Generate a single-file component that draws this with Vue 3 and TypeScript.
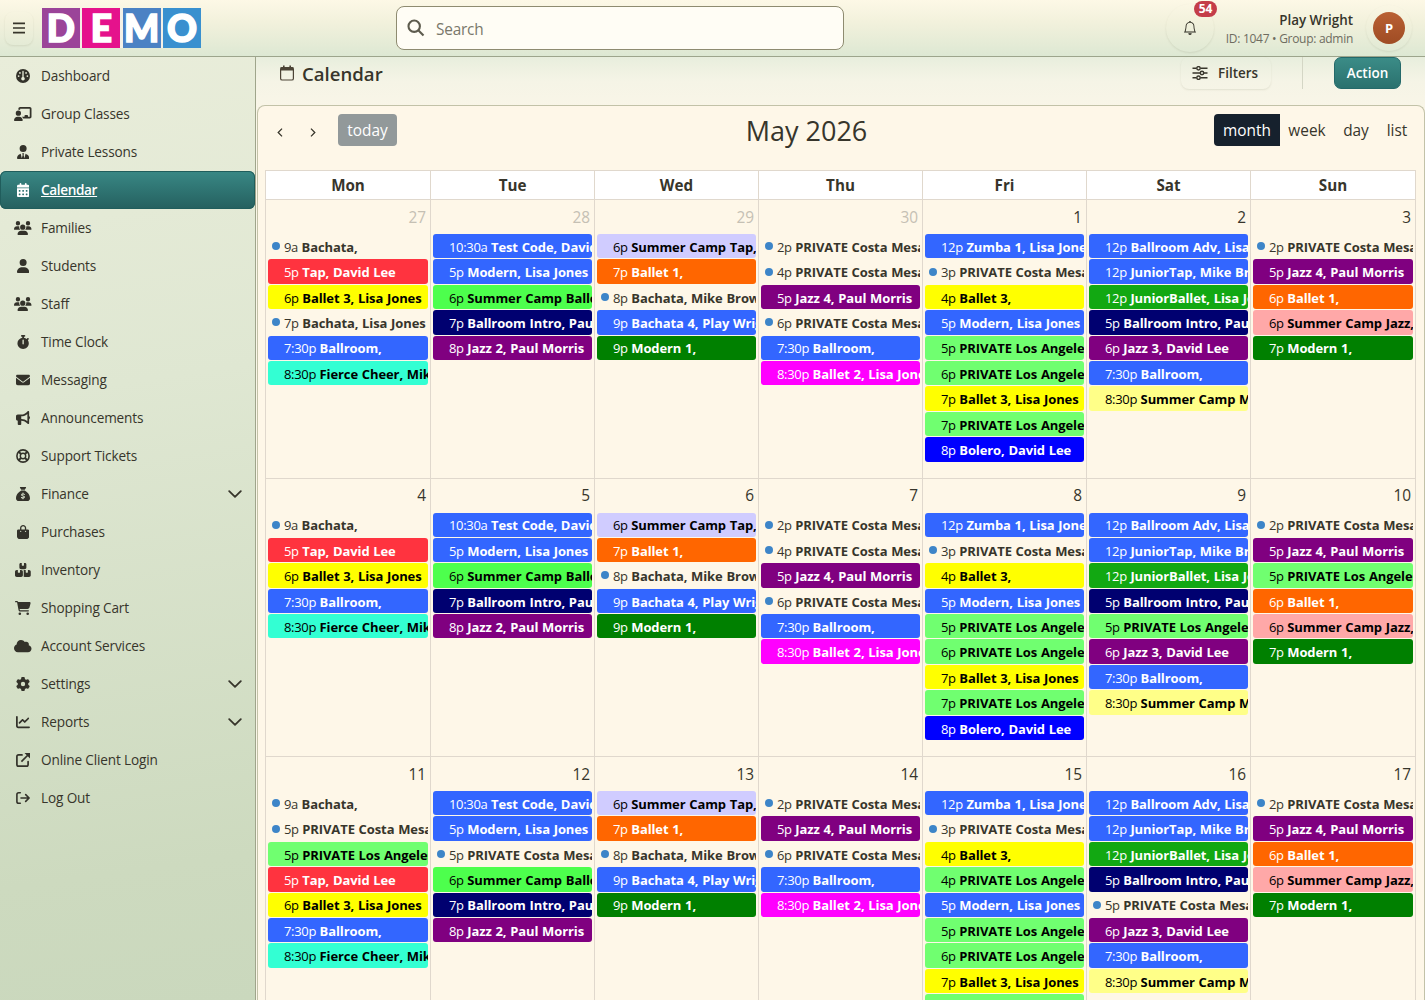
<script setup lang="ts">
interface NavItem {
  label: string
  icon: string
  width?: number
  active?: boolean
  expandable?: boolean
}

interface CalendarEvent {
  time: string
  title: string
  color: string
}

interface Day {
  num: number
  muted?: boolean
  events: CalendarEvent[]
}

const users =
  'M144 0a80 80 0 1 1 0 160A80 80 0 1 1 144 0zM512 0a80 80 0 1 1 0 160A80 80 0 1 1 512 0zM0 298.7C0 239.8 47.8 192 106.7 192h42.7c15.9 0 31 3.5 44.6 9.7c-1.3 7.2-1.9 14.7-1.9 22.3c0 38.2 16.8 72.5 43.3 96c-.2 0-.4 0-.7 0H21.3C9.6 320 0 310.4 0 298.7zM405.3 320c-.2 0-.4 0-.7 0c26.6-23.5 43.3-57.8 43.3-96c0-7.6-.7-15-1.9-22.3c13.6-6.3 28.7-9.7 44.6-9.7h42.7C592.2 192 640 239.8 640 298.7c0 11.8-9.6 21.3-21.3 21.3H405.3zM224 224a96 96 0 1 1 192 0 96 96 0 1 1 -192 0zM128 485.3C128 411.7 187.7 352 261.3 352H378.7C452.3 352 512 411.7 512 485.3c0 14.7-11.9 26.7-26.7 26.7H154.7c-14.7 0-26.7-11.9-26.7-26.7z'

const nav: NavItem[] = [
  { label: 'Dashboard', icon: 'M0 256a256 256 0 1 1 512 0A256 256 0 1 1 0 256zm320 96c0-26.9-16.5-49.9-40-59.3V88c0-13.3-10.7-24-24-24s-24 10.7-24 24V292.7c-23.5 9.5-40 32.5-40 59.3c0 35.3 28.7 64 64 64s64-28.7 64-64zM144 176a32 32 0 1 0 0-64 32 32 0 1 0 0 64zm-16 80a32 32 0 1 0 -64 0 32 32 0 1 0 64 0zm288 32a32 32 0 1 0 0-64 32 32 0 1 0 0 64zM400 144a32 32 0 1 0 -64 0 32 32 0 1 0 64 0z' },
  { label: 'Group Classes', width: 640, icon: 'M160 64c0-35.3 28.7-64 64-64H576c35.3 0 64 28.7 64 64V352c0 35.3-28.7 64-64 64H336.8c-11.8-25.5-29.9-47.5-52.4-64H384V320c0-17.7 14.3-32 32-32h64c17.7 0 32 14.3 32 32v32h64V64L224 64v49.1C205.2 102.2 183.3 96 160 96V64zm0 64a96 96 0 1 1 0 192 96 96 0 1 1 0-192zM133.3 352h53.3C260.3 352 320 411.7 320 485.3c0 14.7-11.9 26.7-26.7 26.7H26.7C11.9 512 0 500.1 0 485.3C0 411.7 59.7 352 133.3 352z' },
  { label: 'Private Lessons', width: 448, icon: 'M96 128a128 128 0 1 0 256 0A128 128 0 1 0 96 128zm94.5 200.2l18.6 31L175.8 483.1l-36-146.9c-2-8.1-9.8-13.4-17.9-11.3C51.9 342.4 0 405.8 0 481.3c0 17 13.8 30.7 30.7 30.7H162.5H168 280h5.5H417.3c17 0 30.7-13.8 30.7-30.7c0-75.5-51.9-138.9-121.9-156.4c-8.1-2-15.9 3.3-17.9 11.3l-36 146.9L238.9 359.2l18.6-31c6.4-10.7-1.3-24.2-13.7-24.2H224 204.3c-12.4 0-20.1 13.6-13.7 24.2z' },
  { label: 'Calendar', width: 448, active: true, icon: 'M128 0c17.7 0 32 14.3 32 32V64H288V32c0-17.7 14.3-32 32-32s32 14.3 32 32V64h48c26.5 0 48 21.5 48 48v48H0V112C0 85.5 21.5 64 48 64H96V32c0-17.7 14.3-32 32-32zM0 192H448V464c0 26.5-21.5 48-48 48H48c-26.5 0-48-21.5-48-48V192zm64 80v32c0 8.8 7.2 16 16 16h32c8.8 0 16-7.2 16-16V272c0-8.8-7.2-16-16-16H80c-8.8 0-16 7.2-16 16zm128 0v32c0 8.8 7.2 16 16 16h32c8.8 0 16-7.2 16-16V272c0-8.8-7.2-16-16-16H208c-8.8 0-16 7.2-16 16zm144-16c-8.8 0-16 7.2-16 16v32c0 8.8 7.2 16 16 16h32c8.8 0 16-7.2 16-16V272c0-8.8-7.2-16-16-16H336zM64 400v32c0 8.8 7.2 16 16 16h32c8.8 0 16-7.2 16-16V400c0-8.8-7.2-16-16-16H80c-8.8 0-16 7.2-16 16zm144-16c-8.8 0-16 7.2-16 16v32c0 8.8 7.2 16 16 16h32c8.8 0 16-7.2 16-16V400c0-8.8-7.2-16-16-16H208zm112 16v32c0 8.8 7.2 16 16 16h32c8.8 0 16-7.2 16-16V400c0-8.8-7.2-16-16-16H336c-8.8 0-16 7.2-16 16z' },
  { label: 'Families', width: 640, icon: users },
  { label: 'Students', width: 448, icon: 'M224 256A128 128 0 1 0 224 0a128 128 0 1 0 0 256zm-45.7 48C79.8 304 0 383.8 0 482.3C0 498.7 13.3 512 29.7 512H418.3c16.4 0 29.7-13.3 29.7-29.7C448 383.8 368.2 304 269.7 304H178.3z' },
  { label: 'Staff', width: 640, icon: users },
  { label: 'Time Clock', width: 448, icon: 'M176 0c-17.7 0-32 14.3-32 32s14.3 32 32 32h16V98.4C92.3 113.8 16 200 16 304c0 114.9 93.1 208 208 208s208-93.1 208-208c0-41.8-12.3-80.7-33.5-113.2l24.1-24.1c12.5-12.5 12.5-32.8 0-45.3s-32.8-12.5-45.3 0L355.7 143c-28.1-23-62.2-38.8-99.7-44.6V64h16c17.7 0 32-14.3 32-32s-14.3-32-32-32H224 176zm72 192V320c0 13.3-10.7 24-24 24s-24-10.7-24-24V192c0-13.3 10.7-24 24-24s24 10.7 24 24z' },
  { label: 'Messaging', icon: 'M48 64C21.5 64 0 85.5 0 112c0 15.1 7.1 29.3 19.2 38.4L236.8 313.6c11.4 8.5 27 8.5 38.4 0L492.8 150.4c12.1-9.1 19.2-23.3 19.2-38.4c0-26.5-21.5-48-48-48H48zM0 176V384c0 35.3 28.7 64 64 64H448c35.3 0 64-28.7 64-64V176L294.4 339.2c-22.8 17.1-54 17.1-76.8 0L0 176z' },
  { label: 'Announcements', icon: 'M480 32c0-12.9-7.8-24.6-19.8-29.6s-25.7-2.2-34.9 6.9L381.7 53c-48 48-113.1 75-181 75H192 160 64c-35.3 0-64 28.7-64 64v96c0 35.3 28.7 64 64 64l0 128c0 17.7 14.3 32 32 32h64c17.7 0 32-14.3 32-32V352l8.7 0c67.9 0 133 27 181 75l43.6 43.6c9.2 9.2 22.9 11.9 34.9 6.9s19.8-16.6 19.8-29.6V300.4c18.6-8.8 32-32.5 32-60.4s-13.4-51.6-32-60.4V32zm-64 76.7V240 371.3C357.2 317.8 280.5 288 200.7 288H192V192h8.7c79.8 0 156.5-29.8 215.3-83.3z' },
  { label: 'Support Tickets', icon: 'ring' },
  { label: 'Finance', icon: 'sack', expandable: true },
  { label: 'Purchases', width: 448, icon: 'M160 112c0-35.3 28.7-64 64-64s64 28.7 64 64v48H160V112zm-48 48H48c-26.5 0-48 21.5-48 48V416c0 53 43 96 96 96H352c53 0 96-43 96-96V208c0-26.5-21.5-48-48-48H336V112C336 50.1 285.9 0 224 0S112 50.1 112 112v48zm24 48a24 24 0 1 1 0 48 24 24 0 1 1 0-48zm152 24a24 24 0 1 1 48 0 24 24 0 1 1 -48 0z' },
  { label: 'Inventory', width: 576, icon: 'M248 0H208c-26.5 0-48 21.5-48 48V160c0 35.3 28.7 64 64 64H352c35.3 0 64-28.7 64-64V48c0-26.5-21.5-48-48-48H328V80c0 8.8-7.2 16-16 16H264c-8.8 0-16-7.2-16-16V0zM64 256c-35.3 0-64 28.7-64 64V448c0 35.3 28.7 64 64 64H224c35.3 0 64-28.7 64-64V320c0-35.3-28.7-64-64-64H184v80c0 8.8-7.2 16-16 16H120c-8.8 0-16-7.2-16-16V256H64zM352 512H512c35.3 0 64-28.7 64-64V320c0-35.3-28.7-64-64-64H472v80c0 8.8-7.2 16-16 16H408c-8.8 0-16-7.2-16-16V256H352c-15 0-28.8 5.1-39.7 13.8c4.9 10.4 7.7 22 7.7 34.2V464c0 12.2-2.8 23.8-7.7 34.2C323.2 506.9 337 512 352 512z' },
  { label: 'Shopping Cart', width: 576, icon: 'M0 24C0 10.7 10.7 0 24 0H69.5c22 0 41.5 12.8 50.6 32h411c26.3 0 45.5 25 38.6 50.4l-41 152.3c-8.5 31.4-37 53.3-69.5 53.3H170.7l5.4 28.5c2.2 11.3 12.1 19.5 23.6 19.5H488c13.3 0 24 10.7 24 24s-10.7 24-24 24H199.7c-34.6 0-64.3-24.6-70.7-58.5L77.4 54.5c-.7-3.8-4-6.5-7.9-6.5H24C10.7 48 0 37.3 0 24zM128 464a48 48 0 1 1 96 0 48 48 0 1 1 -96 0zm336-48a48 48 0 1 1 0 96 48 48 0 1 1 0-96z' },
  { label: 'Account Services', width: 640, icon: 'M0 336c0 79.5 64.5 144 144 144H512c70.7 0 128-57.3 128-128c0-61.9-44-113.6-102.4-125.4c4.1-10.7 6.4-22.4 6.4-34.6c0-53-43-96-96-96c-19.7 0-38.1 6-53.3 16.2C367 64.2 315.3 32 256 32C167.6 32 96 103.6 96 192c0 2.7 .1 5.4 .2 8.1C40.2 219.8 0 273.2 0 336z' },
  { label: 'Settings', expandable: true, icon: 'M495.9 166.6c3.2 8.7 .5 18.4-6.4 24.6l-43.3 39.4c1.1 8.3 1.7 16.8 1.7 25.4s-.6 17.1-1.7 25.4l43.3 39.4c6.9 6.2 9.6 15.9 6.4 24.6c-4.4 11.9-9.7 23.3-15.8 34.3l-4.7 8.1c-6.6 11-14 21.4-22.1 31.2c-5.9 7.2-15.7 9.6-24.5 6.8l-55.7-17.7c-13.4 10.3-28.2 18.9-44 25.4l-12.5 57.1c-2 9.1-9 16.3-18.2 17.8c-13.8 2.3-28 3.5-42.5 3.5s-28.7-1.2-42.5-3.5c-9.2-1.5-16.2-8.7-18.2-17.8l-12.5-57.1c-15.8-6.5-30.6-15.1-44-25.4L83.1 425.9c-8.8 2.8-18.6 .3-24.5-6.8c-8.1-9.8-15.5-20.2-22.1-31.2l-4.7-8.1c-6.1-11-11.4-22.4-15.8-34.3c-3.2-8.7-.5-18.4 6.4-24.6l43.3-39.4C64.6 273.1 64 264.6 64 256s.6-17.1 1.7-25.4L22.4 191.2c-6.9-6.2-9.6-15.9-6.4-24.6c4.4-11.9 9.7-23.3 15.8-34.3l4.7-8.1c6.6-11 14-21.4 22.1-31.2c5.9-7.2 15.7-9.6 24.5-6.8l55.7 17.7c13.4-10.3 28.2-18.9 44-25.4l12.5-57.1c2-9.1 9-16.3 18.2-17.8C227.3 1.2 241.5 0 256 0s28.7 1.2 42.5 3.5c9.2 1.5 16.2 8.7 18.2 17.8l12.5 57.1c15.8 6.5 30.6 15.1 44 25.4l55.7-17.7c8.8-2.8 18.6-.3 24.5 6.8c8.1 9.8 15.5 20.2 22.1 31.2l4.7 8.1c6.1 11 11.4 22.4 15.8 34.3zM256 336a80 80 0 1 0 0-160 80 80 0 1 0 0 160z' },
  { label: 'Reports', expandable: true, icon: 'M64 64c0-17.7-14.3-32-32-32S0 46.3 0 64V400c0 44.2 35.8 80 80 80H480c17.7 0 32-14.3 32-32s-14.3-32-32-32H80c-8.8 0-16-7.2-16-16V64zm406.6 86.6c12.5-12.5 12.5-32.8 0-45.3s-32.8-12.5-45.3 0L320 210.7l-57.4-57.4c-12.5-12.5-32.8-12.5-45.3 0l-112 112c-12.5 12.5-12.5 32.8 0 45.3s32.8 12.5 45.3 0L240 221.3l57.4 57.4c12.5 12.5 32.8 12.5 45.3 0l128-128z' },
  { label: 'Online Client Login', icon: 'external' },
  { label: 'Log Out', icon: 'logout' },
]

const darkText = new Set(['yellow', 'lime', 'mint', 'aqua', 'lav', 'pink', 'cream'])

// Each entry is "time|title|color".
const ev = (...rows: string[]): CalendarEvent[] =>
  rows.map((r) => {
    const [time, title, color] = r.split('|')
    return { time, title, color }
  })

const costa = (t: string) => `${t}|PRIVATE Costa Mesa|dot`
const losAngeles = (t: string) => `${t}|PRIVATE Los Angeles|mint`
const ballroom = '7:30p|Ballroom,|blue'
const tap = '5p|Tap, David Lee|red'
const ballet3 = '6p|Ballet 3, Lisa Jones|yellow'
const cheer = '8:30p|Fierce Cheer, Mike|aqua'
const modern = '5p|Modern, Lisa Jones|blue'
const jazz4 = '5p|Jazz 4, Paul Morris|purple'

const tuesday = ev('10:30a|Test Code, David|blue', modern, '6p|Summer Camp Ballet|lime', '7p|Ballroom Intro, Paul|navy', '8p|Jazz 2, Paul Morris|purple')
const wednesday = ev('6p|Summer Camp Tap,|lav', '7p|Ballet 1,|orange', '8p|Bachata, Mike Brown|dot', '9p|Bachata 4, Play Wright|blue', '9p|Modern 1,|green')
const thursday = ev(costa('2p'), costa('4p'), jazz4, costa('6p'), ballroom, '8:30p|Ballet 2, Lisa Jones|magenta')
const friday = ev('12p|Zumba 1, Lisa Jones|blue', costa('3p'), '4p|Ballet 3,|yellow', modern, losAngeles('5p'), losAngeles('6p'), '7p|Ballet 3, Lisa Jones|yellow', losAngeles('7p'), '8p|Bolero, David Lee|pureblue')
const satHead = ['12p|Ballroom Adv, Lisa|blue', '12p|JuniorTap, Mike Brown|blue', '12p|JuniorBallet, Lisa Jones|leaf', '5p|Ballroom Intro, Paul|navy']
const satTail = ['6p|Jazz 3, David Lee|purple', ballroom, '8:30p|Summer Camp Modern|cream']
const sunTail = ['6p|Ballet 1,|orange', '6p|Summer Camp Jazz,|pink', '7p|Modern 1,|green']

const weeks: Day[][] = [
  [
    { num: 27, muted: true, events: ev('9a|Bachata,|dot', tap, ballet3, '7p|Bachata, Lisa Jones|dot', ballroom, cheer) },
    { num: 28, muted: true, events: tuesday },
    { num: 29, muted: true, events: wednesday },
    { num: 30, muted: true, events: thursday },
    { num: 1, events: friday },
    { num: 2, events: ev(...satHead, ...satTail) },
    { num: 3, events: ev(costa('2p'), jazz4, ...sunTail) },
  ],
  [
    { num: 4, events: ev('9a|Bachata,|dot', tap, ballet3, ballroom, cheer) },
    { num: 5, events: tuesday },
    { num: 6, events: wednesday },
    { num: 7, events: thursday },
    { num: 8, events: friday },
    { num: 9, events: ev(...satHead, losAngeles('5p'), ...satTail) },
    { num: 10, events: ev(costa('2p'), jazz4, losAngeles('5p'), ...sunTail) },
  ],
  [
    { num: 11, events: ev('9a|Bachata,|dot', costa('5p'), losAngeles('5p'), tap, ballet3, ballroom, cheer) },
    { num: 12, events: ev('10:30a|Test Code, David|blue', modern, costa('5p'), '6p|Summer Camp Ballet|lime', '7p|Ballroom Intro, Paul|navy', '8p|Jazz 2, Paul Morris|purple') },
    { num: 13, events: wednesday },
    { num: 14, events: ev(costa('2p'), jazz4, costa('6p'), ballroom, '8:30p|Ballet 2, Lisa Jones|magenta') },
    { num: 15, events: ev('12p|Zumba 1, Lisa Jones|blue', costa('3p'), '4p|Ballet 3,|yellow', losAngeles('4p'), modern, losAngeles('5p'), losAngeles('6p'), '7p|Ballet 3, Lisa Jones|yellow', losAngeles('7p')) },
    { num: 16, events: ev(...satHead, costa('5p'), ...satTail) },
    { num: 17, events: ev(costa('2p'), jazz4, ...sunTail) },
  ],
]

const weekdays = ['Mon', 'Tue', 'Wed', 'Thu', 'Fri', 'Sat', 'Sun']
const logo = [
  { ch: 'D', bg: '#9b4499' },
  { ch: 'E', bg: '#e5128c' },
  { ch: 'M', bg: '#4b82c4' },
  { ch: 'O', bg: '#3990cf' },
]
</script>

<template>
  <div class="app">
    <header class="top">
      <button class="burger" aria-label="Menu">
        <svg width="14" height="14" viewBox="0 0 14 14"><path d="M1 2.4h12M1 7h12M1 11.6h12" stroke="currentColor" stroke-width="1.7" /></svg>
      </button>
      <div class="logo">
        <span v-for="l in logo" :key="l.ch" :style="{ background: l.bg }"><b>{{ l.ch }}</b></span>
      </div>
      <div class="search">
        <svg width="18" height="18" viewBox="0 0 18 18" fill="none" stroke="currentColor" stroke-width="2.1"><circle cx="7.2" cy="7.2" r="5.7" /><path d="M11.3 11.3l5.2 5.2" /></svg>
        <span>Search</span>
      </div>
      <div class="bell">
        <svg width="14" height="14" viewBox="0 0 16 16" fill="currentColor"><path d="M8 16a2 2 0 0 0 2-2H6a2 2 0 0 0 2 2M8 1.918l-.797.161A4 4 0 0 0 4 6c0 .628-.134 2.197-.459 3.742-.16.767-.376 1.566-.663 2.258h10.244c-.287-.692-.502-1.49-.663-2.258C12.134 8.197 12 6.628 12 6a4 4 0 0 0-3.203-3.92zM14.22 12c.223.447.481.801.78 1H1c.299-.199.557-.553.78-1C2.68 10.2 3 6.88 3 6c0-2.42 1.72-4.44 4.005-4.901a1 1 0 1 1 1.99 0A5 5 0 0 1 13 6c0 .88.32 4.2 1.22 6" /></svg>
        <span class="badge">54</span>
      </div>
      <div class="who">
        <strong>Play Wright</strong>
        <small>ID: 1047 • Group: admin</small>
      </div>
      <div class="ring"><span class="avatar">P</span></div>
    </header>

    <div class="body">
      <nav class="side">
        <a v-for="item in nav" :key="item.label" class="item" :class="{ active: item.active }">
          <span class="ico">
            <svg v-if="item.icon === 'ring'" width="14" height="14" viewBox="0 0 14 14" fill="none" stroke="currentColor">
              <circle cx="7" cy="7" r="6.1" stroke-width="1.6" /><circle cx="7" cy="7" r="2.7" stroke-width="1.4" />
              <path d="M2.7 2.7l2.4 2.4M11.3 2.7L8.9 5.1M2.7 11.3l2.4-2.4M11.3 11.3L8.9 8.9" stroke-width="2" />
            </svg>
            <svg v-else-if="item.icon === 'sack'" width="14" height="14" viewBox="0 0 512 512">
              <path fill="currentColor" d="M320 96H192L144.6 24.9C137.5 14.2 145.1 0 157.9 0H354.1c12.8 0 20.4 14.2 13.3 24.9L320 96zM192 128H320c3.8 2.5 8.1 5.3 13 8.4C389.7 172.7 512 250.9 512 416c0 53-43 96-96 96H96c-53 0-96-43-96-96C0 250.9 122.3 172.7 179 136.4c4.8-3.1 9.2-5.9 13-8.4z" />
              <path fill="none" stroke="#dbe4cf" stroke-width="38" stroke-linecap="round" d="M310 270c-30-14-100-26-104 18c-2 52 100 22 102 76c-2 46-76 38-108 18M256 222v26M256 404v22" />
            </svg>
            <svg v-else-if="item.icon === 'external'" width="14" height="14" viewBox="0 0 14 14" fill="none" stroke="currentColor" stroke-width="1.7">
              <path d="M6 1.9H2.6Q.9 1.9.9 3.600V11.4Q.9 13.100 2.600 13.100H10.400Q12.100 13.100 12.100 11.400V8.500" stroke-linecap="round" /><path d="M5.400 8.600L12 2" /><path d="M8.500 0H14V5.500z" fill="currentColor" stroke="none" />
            </svg>
            <svg v-else-if="item.icon === 'logout'" width="14" height="14" viewBox="0 0 14 14" fill="none" stroke="currentColor" stroke-width="1.6" stroke-linecap="round" stroke-linejoin="round">
              <path d="M4.300 1.800H2.700Q.9 1.800.9 3.600V10.400Q.9 12.200 2.700 12.200H4.300M5 7H13M9.700 3.600L13.100 7L9.700 10.400" />
            </svg>
            <svg v-else :width="((item.width ?? 512) / 512) * 14" height="14" :viewBox="`0 0 ${item.width ?? 512} 512`"><path fill="currentColor" :d="item.icon" /></svg>
          </span>
          <span class="label">{{ item.label }}</span>
          <svg v-if="item.expandable" class="chev" width="14" height="8" viewBox="0 0 14 8" fill="none" stroke="currentColor" stroke-width="1.8" stroke-linecap="round" stroke-linejoin="round"><path d="M1.200 1.200L7 6.800L12.800 1.200" /></svg>
        </a>
      </nav>

      <main class="main">
        <div class="bar">
          <svg width="14" height="16" viewBox="0 0 14 16"><rect x=".6" y="2.600" width="12.800" height="12.400" rx="1.600" fill="none" stroke="currentColor" stroke-width="1.200" /><path d="M.6 2.200h12.800v3.200H.6zM3 .4h1.600v2.400H3zM9.400.4H11v2.400H9.400z" fill="currentColor" /></svg>
          <h1>Calendar</h1>
          <button class="filters">
            <svg width="16" height="14" viewBox="0 0 16 14" fill="none" stroke="currentColor" stroke-width="1.400"><path d="M0.500 2.300h4M8.500 2.300h7M.5 7h7.500M12 7h3.500M.5 11.700h4M8.500 11.700h7" /><circle cx="6.500" cy="2.300" r="1.700" /><circle cx="10" cy="7" r="1.700" /><circle cx="6.500" cy="11.700" r="1.700" /></svg>
            <span>Filters</span>
          </button>
          <i class="sep"></i>
          <button class="action">Action</button>
        </div>

        <section class="card">
          <div class="tools">
            <div class="left">
              <svg width="6" height="9" viewBox="0 0 6 9" fill="none" stroke="currentColor" stroke-width="1.300"><path d="M5 .6L1.200 4.500L5 8.400" /></svg>
              <svg width="6" height="9" viewBox="0 0 6 9" fill="none" stroke="currentColor" stroke-width="1.300"><path d="M1 .6L4.800 4.500L1 8.400" /></svg>
              <button class="today">today</button>
            </div>
            <h2>May 2026</h2>
            <div class="views">
              <span class="on">month</span><span class="wk">week</span><span class="dy">day</span><span class="ls">list</span>
            </div>
          </div>

          <div class="grid">
            <div class="row head">
              <div v-for="d in weekdays" :key="d" class="cell">{{ d }}</div>
            </div>
            <div v-for="(week, w) in weeks" :key="w" class="row week">
              <div v-for="day in week" :key="day.num" class="cell">
                <div class="num" :class="{ muted: day.muted }">{{ day.num }}</div>
                <div v-for="(e, i) in day.events" :key="i" class="ev" :class="[e.color, { dark: darkText.has(e.color) }]">
                  <i class="pt"></i><span class="time">{{ e.time }}</span><span class="title">{{ e.title }}</span>
                </div>
              </div>
            </div>
          </div>
        </section>
      </main>
    </div>
  </div>
</template>

<style>
body {
  margin: 0;
  overflow: hidden;
}
</style>

<style scoped>
.app {
  box-sizing: border-box;
  width: 1425px;
  height: 1000px;
  overflow: hidden;
  display: flex;
  flex-direction: column;
  font-family: 'Open Sans', 'Noto Sans', sans-serif;
  color: #37352b;
  background: #fef7e8;
}
.app * {
  box-sizing: border-box;
}
button {
  font-family: inherit;
  border: 0;
  background: none;
  padding: 0;
  color: inherit;
}
.top {
  height: 57px;
  flex: none;
  display: flex;
  align-items: center;
  border-bottom: 1px solid #9da58c;
  background: linear-gradient(180deg, #fdf8e6 0%, #f2f1dc 40%, #dde8d3 100%);
}
.burger {
  width: 28px;
  height: 33px;
  margin-left: 5px;
  border-radius: 8px;
  display: flex;
  align-items: center;
  justify-content: center;
  box-shadow: 0 1px 2px rgba(90, 90, 60, 0.12);
}
.logo {
  display: flex;
  gap: 2.5px;
  margin-left: 9px;
  width: 159px;
  height: 40px;
  background: #f4f1e6;
}
.logo span {
  flex: 1 1 0;
  min-width: 0;
  display: flex;
  align-items: center;
  justify-content: center;
  color: #fff;
}
.logo b {
  font-family: Lato, 'Open Sans', sans-serif;
  font-weight: 900;
  font-size: 37px;
  line-height: 40px;
  -webkit-text-stroke: 1.6px #fff;
}
.search {
  width: 448px;
  height: 44px;
  margin-left: 195px;
  padding-left: 10px;
  border: 1px solid #8e8b70;
  border-radius: 8px;
  background: #fffdf5;
  display: flex;
  align-items: center;
  gap: 11px;
  font-size: 15.4px;
  color: #7a786b;
}
.search svg {
  color: #5d5b4d;
}
.search span {
  padding-top: 2px;
  letter-spacing: -0.2px;
}
.bell {
  position: relative;
  width: 48px;
  height: 48px;
  margin-left: 322px;
  border-radius: 50%;
  display: flex;
  align-items: center;
  justify-content: center;
  box-shadow: 0 1px 2px rgba(90, 90, 60, 0.13);
  color: #2d2b22;
}
.badge {
  position: absolute;
  left: 28px;
  top: -3px;
  width: 23px;
  height: 16px;
  border-radius: 8px;
  background: #c43d49;
  color: #fff;
  font-size: 12px;
  font-weight: 700;
  line-height: 16px;
  text-align: center;
}
.who {
  width: 139px;
  display: flex;
  flex-direction: column;
  align-items: flex-end;
  white-space: nowrap;
}
.who strong {
  font-size: 13.4px;
  line-height: 19px;
  font-weight: 600;
  padding-top: 2px;
}
.who small {
  font-size: 12px;
  line-height: 17px;
  letter-spacing: -0.29px;
  color: #6e6c60;
}
.ring {
  width: 46px;
  height: 46px;
  margin-left: 13px;
  border-radius: 50%;
  display: flex;
  align-items: center;
  justify-content: center;
  box-shadow: 0 1px 2px rgba(90, 90, 60, 0.1);
}
.avatar {
  width: 32px;
  height: 32px;
  border-radius: 50%;
  background: linear-gradient(180deg, #b96034, #9f4c24);
  color: #fff;
  font-size: 13px;
  font-weight: 700;
  line-height: 32px;
  text-align: center;
}
.body {
  flex: 1;
  min-height: 0;
  display: flex;
}
.side {
  width: 256px;
  flex: none;
  border-right: 1px solid #9fa58b;
  background: linear-gradient(172deg, #e9edda 0%, #dfe7d2 35%, #cddabf 85%, #cad8bd 100%);
}
.item {
  height: 38px;
  display: flex;
  align-items: center;
  font-size: 13.6px;
  letter-spacing: -0.14px;
}
.item.active {
  border-radius: 6px;
  background: linear-gradient(180deg, #398885, #25605f);
  box-shadow: inset 0 0 0 1px #205d5c;
  color: #fff;
  font-weight: 600;
  letter-spacing: -0.36px;
}
.item.active .label {
  text-decoration: underline;
}
.ico {
  width: 18px;
  margin-left: 14px;
  flex: none;
  display: flex;
  justify-content: center;
  color: #33322a;
}
.active .ico {
  color: #fff;
}
.label {
  margin-left: 9px;
  padding-bottom: 1px;
  flex: 1;
}
.chev {
  margin-right: 13px;
}
.main {
  flex: 1;
  min-width: 0;
  display: flex;
  flex-direction: column;
  padding-left: 1px;
  background: linear-gradient(180deg, #e8eedd 0, #f5f4e6 24px, #faf6e8 60px);
}
.bar {
  height: 48px;
  flex: none;
  display: flex;
  align-items: flex-start;
  padding-left: 23px;
}
.bar > svg {
  margin-top: 8px;
  color: #4c4436;
}
h1 {
  margin: 4px 0 0 8px;
  font-size: 18.6px;
  line-height: 26px;
  font-weight: 600;
}
.filters {
  margin-left: auto;
  width: 90px;
  height: 32px;
  display: flex;
  align-items: center;
  justify-content: center;
  gap: 10px;
  padding-right: 2px;
  border-radius: 8px;
  box-shadow: 0 1px 2px rgba(90, 90, 60, 0.13);
  font-size: 13.4px;
  font-weight: 600;
}
.sep {
  width: 1px;
  height: 32px;
  margin: 0 31px 0 31px;
  background: #d4d6c5;
}
.action {
  width: 67px;
  height: 32px;
  margin-right: 24px;
  border-radius: 7px;
  border: 1px solid #24696a;
  background: linear-gradient(180deg, #3b8c87, #2a716e);
  color: #fff;
  font-size: 13.5px;
  font-weight: 600;
}
.card {
  flex: 1;
  min-height: 0;
  overflow: hidden;
  border: 1px solid #c2c2a8;
  border-bottom: 0;
  border-radius: 8px 8px 0 0;
  background: #fef7e8;
  padding-left: 7px;
}
.tools {
  height: 64px;
  display: grid;
  grid-template-columns: 134px 1fr 203px;
  padding: 8px 7px 0 0;
}
.left {
  display: flex;
  align-items: center;
  height: 32px;
  gap: 27px;
  padding-left: 12px;
}
.left svg {
  flex: none;
  margin-top: 4px;
}
.today {
  width: 59px;
  flex: none;
  height: 32px;
  margin-left: -5px;
  border-radius: 4px;
  background: #92999a;
  color: #fff;
  font-size: 15.4px;
}
h2 {
  margin: 0;
  justify-self: center;
  font-size: 27px;
  line-height: 34px;
  font-weight: 400;
  white-space: nowrap;
}
.views {
  display: flex;
  font-size: 15.4px;
  line-height: 34px;
  text-align: center;
}
.views span {
  height: 32px;
}
.on {
  width: 66px;
  background: #16212d;
  color: #fff;
  border-radius: 4px 0 0 4px;
}
.wk {
  width: 54px;
}
.dy {
  width: 44px;
}
.ls {
  width: 38px;
}
.grid {
  width: 1151px;
  border-left: 1px solid #e0d8cd;
  border-top: 1px solid #e0d8cd;
}
.row {
  display: grid;
  grid-template-columns: 165px 164px 164px 164px 164px 164px 165px;
  border-bottom: 1px solid #e0d8cd;
}
.cell {
  min-width: 0;
  border-right: 1px solid #e0d8cd;
}
.head {
  height: 29px;
  background: #fff;
  font-size: 15.2px;
  line-height: 29px;
  font-weight: 700;
  text-align: center;
}
.week {
  height: 278.500px;
}
.num {
  height: 34px;
  padding: 4.500px 4px 0 0;
  text-align: right;
  font-size: 15.4px;
  line-height: 26px;
}
.muted {
  color: #c5c0b4;
}
.ev {
  height: 24.400px;
  margin: 0 2px 1px;
  border-radius: 3px;
  display: flex;
  align-items: center;
  overflow: hidden;
  white-space: nowrap;
  font-size: 13px;
  color: #fff;
}
.pt {
  width: 8px;
  height: 8px;
  margin: 0 4px;
  flex: none;
  border-radius: 50%;
}
.time {
  margin-right: 3.500px;
  padding-top: 1.400px;
  letter-spacing: -0.32px;
}
.title {
  font-weight: 700;
  padding-top: 1.400px;
  letter-spacing: -0.1px;
  word-spacing: 0.5px;
}
.dot {
  color: #37352b;
}
.dot .pt {
  background: #3d85c8;
}
.dark {
  color: #000;
}
.blue {
  background: #3366ff;
}
.red {
  background: #ff333f;
}
.yellow {
  background: #ffff00;
}
.aqua {
  background: #33ffd3;
}
.lime {
  background: #4dff4d;
}
.mint {
  background: #70ff70;
}
.navy {
  background: #000070;
}
.purple {
  background: #800080;
}
.lav {
  background: #d0ccff;
}
.orange {
  background: #ff6600;
}
.green {
  background: #008000;
}
.leaf {
  background: #12a812;
}
.magenta {
  background: #ff00ff;
}
.pureblue {
  background: #0000ff;
}
.cream {
  background: #ffff88;
}
.pink {
  background: #ffa8a8;
}
</style>
